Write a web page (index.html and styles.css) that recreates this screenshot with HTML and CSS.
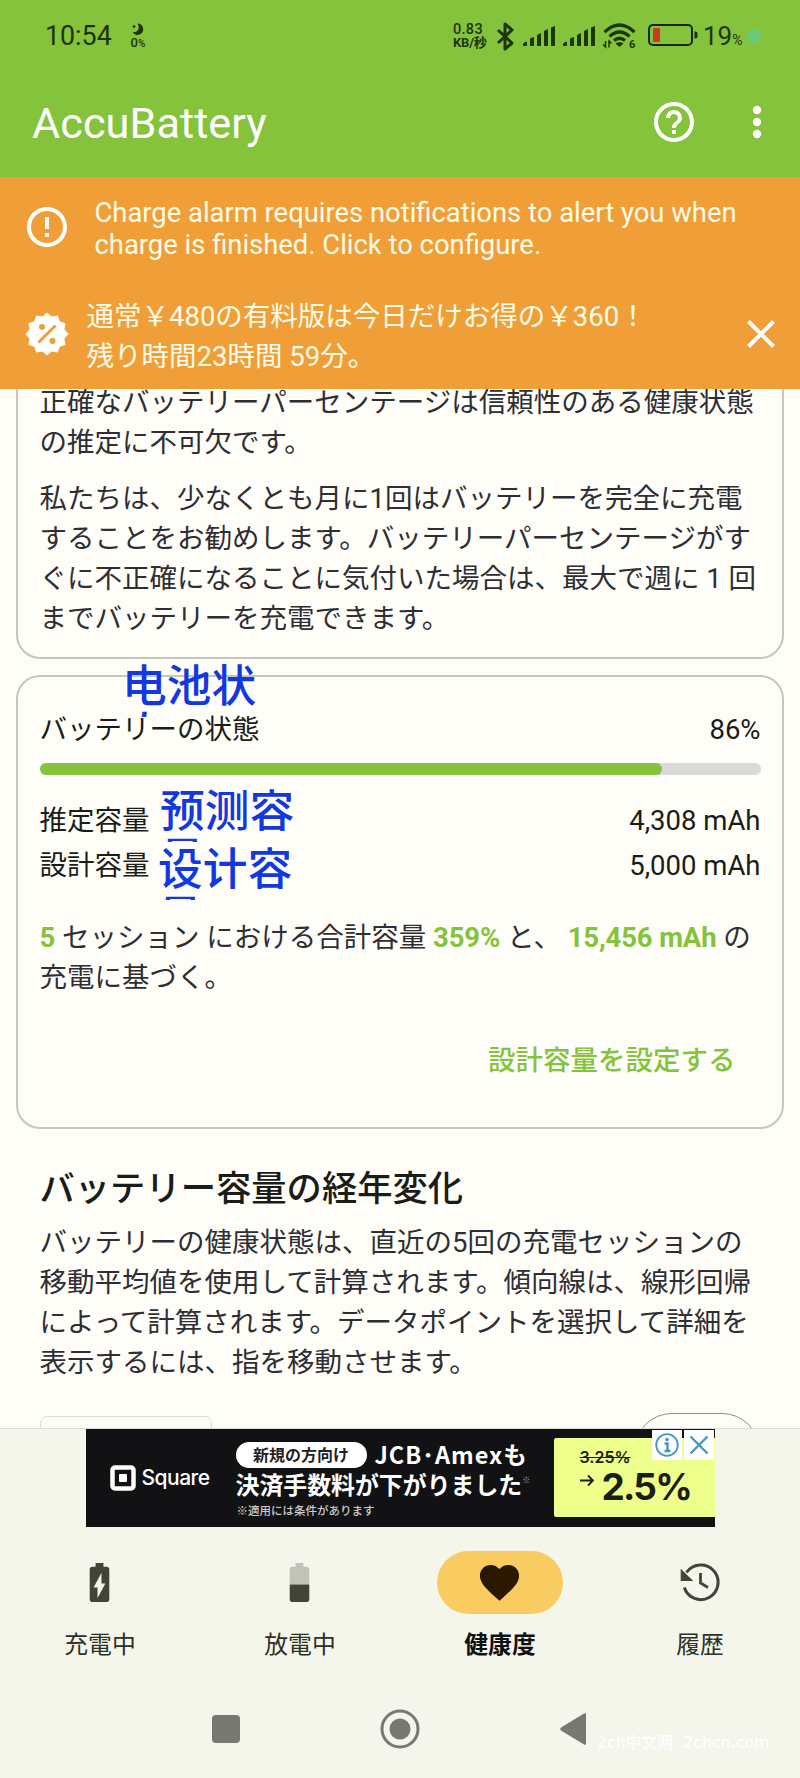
FILE: index.html
```html
<!DOCTYPE html>
<html lang="ja">

<head>
    <meta charset="UTF-8">
    <meta name="viewport" content="width=device-width, initial-scale=1.0">
    <title>AccuBattery</title>
    <link rel="stylesheet" href="styles.css">
</head>

<body>

    <header class="header">
        <div class="status">
            <span class="time">10:54</span>
            <div class="moon">
                <svg width="12" height="12" viewBox="0 0 12 12">
                    <path d="M5.500 0.500a5.700 5.700 0 1 1-5 8.500c5 1.500 8-4 5-8.500z" />
                    <path d="M2 1.500l.7 1.300L4 3.500l-1.300.7L2 5.500l-.7-1.300L0 3.500l1.300-.7z" />
                </svg>
                <span>0<small>%</small></span>
            </div>
            <div class="status-right">
                <div class="speed">
                    <span>0.83</span>
                    <span class="unit">KB/秒</span>
                </div>
                <svg class="bt" width="19" height="29" viewBox="0 0 19 29">
                    <path d="M2 8l14 13-7 6V2l7 6L2 21" fill="none" stroke="#1b3608" stroke-width="3" stroke-linejoin="round" />
                </svg>
                <svg class="signal" width="32" height="22" viewBox="0 0 32 22">
                    <path d="M0 19q2-3 4-2v4H0zM7 13.500l4-1.500v9H7zM14 10l4-2v13h-4zM21 6l4-2v17h-4zM28 2.500l4-1.500v20h-4z" />
                </svg>
                <svg class="signal" width="32" height="22" viewBox="0 0 32 22">
                    <path d="M0 19q2-3 4-2v4H0zM7 13.500l4-1.500v9H7zM14 10l4-2v13h-4zM21 6l4-2v17h-4zM28 2.500l4-1.500v20h-4z" />
                </svg>
                <svg class="wifi" width="34" height="26" viewBox="0 0 34 26">
                    <g fill="none" stroke="#1b3608" stroke-width="3.200">
                        <path d="M1.500 9q15-14 30 0" />
                        <path d="M6.500 13.500q10-9 20 0" />
                        <path d="M11 17.500q5.500-4.500 11 0" />
                    </g>
                    <path d="M12.500 20.500q4-2.500 8 0L16.500 24z" />
                    <path d="M2.500 18v6L0 21.500M6 24.500v-6.500l2.500 2.500" fill="none" stroke="#1b3608" stroke-width="1.500" />
                    <text x="26" y="25" font-size="11" font-weight="700" letter-spacing="0">6</text>
                </svg>
                <svg class="batt" width="50" height="22" viewBox="0 0 50 22">
                    <rect x="1" y="1" width="43" height="20" rx="4" fill="none" stroke="#14280a" stroke-width="2" />
                    <rect x="5" y="4" width="7" height="14" rx="1" fill="#c93b20" />
                    <path d="M46.500 7.500h1q2 0 2 2v3q0 2-2 2h-1z" />
                </svg>
                <span class="level">19<small>%</small></span>
                <i class="dot"></i>
            </div>
        </div>
        <div class="toolbar">
            <h1>AccuBattery</h1>
            <svg class="help" width="48" height="48" viewBox="0 0 24 24">
                <path d="M11 18h2v-2h-2v2zm1-16C6.480 2 2 6.480 2 12s4.480 10 10 10 10-4.480 10-10S17.520 2 12 2zm0 18c-4.410 0-8-3.590-8-8s3.590-8 8-8 8 3.590 8 8-3.590 8-8 8zm0-14c-2.210 0-4 1.790-4 4h2c0-1.100.9-2 2-2s2 .9 2 2c0 2-3 1.750-3 5h2c0-2.250 3-2.500 3-5 0-2.210-1.790-4-4-4z" />
            </svg>
            <svg class="more" width="48" height="48" viewBox="0 0 24 24">
                <circle cx="12" cy="6" r="2.100" />
                <circle cx="12" cy="12" r="2.100" />
                <circle cx="12" cy="18" r="2.100" />
            </svg>
        </div>
    </header>

    <div class="banner">
        <div class="alarm">
            <svg width="48" height="48" viewBox="0 0 24 24">
                <path d="M11 15h2v2h-2zm0-8h2v6h-2zm.99-5C6.470 2 2 6.480 2 12s4.470 10 9.990 10C17.520 22 22 17.520 22 12S17.520 2 11.990 2zM12 20c-4.420 0-8-3.580-8-8s3.580-8 8-8 8 3.580 8 8-3.580 8-8 8z" />
            </svg>
            <p>Charge alarm requires notifications to alert you when<br>charge is finished. Click to configure.</p>
        </div>
        <div class="sale">
            <svg width="44" height="44" viewBox="-22 -22 44 44">
                <path d="M0-21.500L4.660-17.390 10.750-18.600 12.730-12.730 18.600-10.750 17.390-4.660 21.500 0 17.390 4.660 18.600 10.750 12.730 12.730 10.750 18.600 4.660 17.390 0 21.500-4.660 17.390-10.750 18.600-12.730 12.730-18.600 10.750-17.390 4.660-21.500 0-17.390-4.660-18.600-10.750-12.730-12.730-10.750-18.600-4.660-17.390z" />
                <g fill="#f09f38">
                    <circle cx="-5" cy="-7" r="3" />
                    <circle cx="5.500" cy="7" r="3" />
                </g>
                <path d="M-8.500 8.500L8.500-8.500" stroke="#f09f38" stroke-width="3" />
            </svg>
            <p>通常￥480の有料版は今日だけお得の￥360！<br>残り時間23時間 59分。</p>
            <svg class="close" width="28" height="28" viewBox="0 0 28 28">
                <path d="M1.500 1.500l25 25M26.500 1.500l-25 25" stroke="#fff" stroke-width="4" />
            </svg>
        </div>
    </div>

    <main class="main">
        <section class="card card-tips">
            <p>正確なバッテリーパーセンテージは信頼性のある健康状態<br>の推定に不可欠です。</p>
            <p>私たちは、少なくとも月に1回はバッテリーを完全に充電<br>することをお勧めします。バッテリーパーセンテージがす<br>ぐに不正確になることに気付いた場合は、最大で週に 1 回<br>までバッテリーを充電できます。</p>
        </section>

        <section class="card card-health">
            <div class="row row-title">
                <span>バッテリーの状態</span>
                <span>86%</span>
            </div>
            <div class="bar">
                <div class="bar-fill" style="width: 86.300%"></div>
            </div>
            <div class="row">
                <span>推定容量</span>
                <span>4,308 mAh</span>
            </div>
            <div class="row">
                <span>設計容量</span>
                <span>5,000 mAh</span>
            </div>
            <p class="based"><b>5</b> セッション における合計容量 <b>359%</b> と、 <b>15,456 mAh</b> の<br>充電に基づく。</p>
            <a class="set-link">設計容量を設定する</a>

            <!-- 中文注释 -->
            <div class="note note-state">电池状态</div>
            <div class="note note-estimate">预测容量</div>
            <div class="note note-design">设计容量</div>
        </section>

        <section class="history">
            <h2>バッテリー容量の経年変化</h2>
            <p>バッテリーの健康状態は、直近の5回の充電セッションの<br>移動平均値を使用して計算されます。傾向線は、線形回帰<br>によって計算されます。データポイントを選択して詳細を<br>表示するには、指を移動させます。</p>
            <div class="controls">
                <div class="control-box"></div>
                <div class="control-pill"></div>
            </div>
        </section>
    </main>

    <footer class="footer">
        <div class="ad">
            <div class="logo">
                <svg width="26" height="26" viewBox="0 0 26 26">
                    <rect x="2.500" y="2.500" width="21" height="21" rx="2.500" fill="none" stroke="#fff" stroke-width="4.500" />
                    <rect x="9" y="9" width="8" height="8" rx="1" fill="#fff" />
                </svg>
                <span>Square</span>
            </div>
            <div class="ad-text">
                <div class="ad-line1"><span class="tag">新規の方向け</span><span class="cards">JCB･Amexも</span></div>
                <div class="ad-line2">決済手数料が下がりました<sup>※</sup></div>
                <div class="ad-line3">※適用には条件があります</div>
            </div>
            <div class="rate">
                <s>3.25%</s>
                <div class="rate-new">
                    <svg width="15" height="13" viewBox="0 0 15 13">
                        <path d="M0 6.500h13M8 1.500l5 5-5 5" fill="none" stroke="#1c1e14" stroke-width="1.800" />
                    </svg>
                    <strong>2.5%</strong>
                </div>
            </div>
            <div class="ad-choices">
                <svg width="30" height="30" viewBox="0 0 30 30">
                    <circle cx="15" cy="15" r="10.800" fill="none" stroke="#4199bd" stroke-width="1.800" />
                    <circle cx="15" cy="9.500" r="1.800" fill="#4199bd" />
                    <path d="M12.500 13.500H15.500V21M12.500 21h6" fill="none" stroke="#4199bd" stroke-width="2.400" />
                </svg>
                <svg width="30" height="30" viewBox="0 0 30 30">
                    <path d="M6.500 6.500l17 17M23.500 6.500l-17 17" stroke="#4199bd" stroke-width="2.400" />
                </svg>
            </div>
        </div>

        <nav class="tabs">
            <a class="tab">
                <span class="tab-icon">
                    <svg width="47" height="47" viewBox="0 0 24 24">
                        <path d="M15.670 4H14V2h-4v2H8.330C7.600 4 7 4.600 7 5.330v15.330C7 21.400 7.600 22 8.330 22h7.330c.74 0 1.340-.6 1.340-1.330V5.330C17 4.600 16.400 4 15.670 4zM11 20v-5.500H9L13 7v5.500h2L11 20z" />
                    </svg>
                </span>
                <span>充電中</span>
            </a>
            <a class="tab">
                <span class="tab-icon">
                    <svg width="47" height="47" viewBox="0 0 24 24">
                        <path fill="#c1c3b9" d="M17 5.330C17 4.600 16.400 4 15.670 4H14V2h-4v2H8.330C7.600 4 7 4.600 7 5.330V13h10V5.330z" />
                        <path d="M7 13v7.670C7 21.400 7.600 22 8.330 22h7.330c.74 0 1.340-.6 1.340-1.330V13H7z" />
                    </svg>
                </span>
                <span>放電中</span>
            </a>
            <a class="tab active">
                <span class="tab-icon">
                    <svg width="47" height="47" viewBox="0 0 24 24">
                        <path d="M12 21.350l-1.450-1.320C5.400 15.360 2 12.280 2 8.500 2 5.420 4.420 3 7.500 3c1.740 0 3.410.81 4.500 2.090C13.090 3.810 14.760 3 16.500 3 19.580 3 22 5.420 22 8.500c0 3.780-3.400 6.860-8.550 11.540L12 21.350z" />
                    </svg>
                </span>
                <span>健康度</span>
            </a>
            <a class="tab">
                <span class="tab-icon">
                    <svg width="40" height="40" viewBox="0 0 40 40">
                        <path d="M4.300 24.500A17.300 17.300 0 1 0 6.500 9.500" fill="none" stroke="#414439" stroke-width="3" />
                        <path d="M.7 5.700V18h12.600z" />
                        <path d="M20.500 10v10l7.500 4.500" fill="none" stroke="#414439" stroke-width="2.800" />
                    </svg>
                </span>
                <span>履歴</span>
            </a>
        </nav>

        <div class="sysnav">
            <svg width="28" height="28" viewBox="0 0 28 28">
                <rect width="28" height="28" rx="4" />
            </svg>
            <svg width="40" height="40" viewBox="0 0 40 40">
                <circle cx="20" cy="20" r="18" fill="none" stroke="#777872" stroke-width="3" />
                <circle cx="20" cy="20" r="10.500" />
            </svg>
            <svg width="28" height="34" viewBox="0 0 28 34">
                <path d="M1 18.500q-1.500-1.500 0-3L24 1.500q2-1 2 1v29q0 2-2 1z" />
            </svg>
        </div>
        <div class="watermark">2ch中文网&nbsp; 2chcn.com</div>
    </footer>

</body>

</html>
```
FILE: styles.css
```css
body {
    width: 800px;
    height: 1778px;
    margin: 0;
    overflow: hidden;
    background: #fefdf7;
    color: #1b1c18;
    font-family: Roboto, "Noto Sans CJK JP", sans-serif;
    font-size: 27.5px;
    line-height: 40px;
    white-space: nowrap;
}

h1,
h2,
p {
    margin: 0;
    font-weight: 400;
}

svg {
    display: block;
    flex: none;
}

/* header */
.header {
    height: 177px;
    background: #85c33c;
}

.status {
    display: flex;
    align-items: center;
    height: 72px;
    padding: 0 39px 0 45px;
    color: #1b3608;
    fill: #1b3608;
}

.time {
    width: 85px;
    font-size: 26.8px;
}

.moon {
    display: flex;
    flex-direction: column;
    align-items: center;
    gap: 1px;
    width: 16px;
    font-size: 13px;
    line-height: 13px;
    font-weight: 500;
}

.moon small {
    font-size: 10px;
}

.status-right {
    display: flex;
    align-items: center;
    margin-left: auto;
}

.speed {
    display: flex;
    flex-direction: column;
    width: 36px;
    margin-right: 7px;
    font-size: 14.5px;
    line-height: 13px;
    font-weight: 500;
    letter-spacing: 0.3px;
}

.speed .unit {
    font-size: 13px;
    font-weight: 700;
    letter-spacing: -0.2px;
}

.bt {
    margin-right: 8px;
}

.signal {
    margin-right: 8px;
}

.wifi {
    margin-right: 10px;
    overflow: visible;
}

.batt {
    margin: 0 5px 2px 1px;
}

.level {
    width: 44px;
    padding-top: 3px;
    font-size: 26px;
}

.level small {
    font-size: 14px;
}

.dot {
    width: 14px;
    height: 14px;
    border-radius: 50%;
    background: #68cb7a;
}

.toolbar {
    display: flex;
    align-items: center;
    height: 100px;
    padding: 0 19px 0 32px;
    color: #fff;
    fill: #fff;
}

.toolbar h1 {
    margin-right: auto;
    padding-top: 4px;
    font-size: 43.3px;
}

.help {
    margin-right: 35px;
}

/* banner */
.banner {
    height: 212px;
    background: #f09f38;
    color: #fffbe8;
    fill: #fff;
}

.alarm {
    display: flex;
    align-items: center;
    height: 104px;
    padding-left: 23px;
}

.alarm svg {
    margin-bottom: 4px;
}

.alarm p {
    margin-left: 23.5px;
    font-size: 27.4px;
    line-height: 32px;
}

.sale {
    display: flex;
    align-items: center;
    height: 105px;
    padding: 0 25px;
}

.sale p {
    margin-left: 17.5px;
    padding-top: 7px;
}

.close {
    margin-left: auto;
}

/* main */
.main {
    height: 1039px;
    padding: 0 16px;
    overflow: hidden;
}

.card {
    position: relative;
    box-sizing: border-box;
    padding: 0 21.5px;
    border: 2px solid #c5c7be;
    border-radius: 24px;
}

.card-tips {
    height: 290px;
    margin-top: -20px;
    padding-top: 12px;
    color: #2e2e34;
}

.card-tips p {
    margin-bottom: 16px;
}

.card-health {
    display: flex;
    flex-direction: column;
    height: 454px;
    margin-top: 16px;
    padding-top: 33px;
}

.row {
    display: flex;
    justify-content: space-between;
    line-height: 44.500px;
}

.row-title {
    line-height: 40px;
}

.bar {
    height: 12px;
    margin: 13px 0 24px;
    border-radius: 6px;
    background: #dadad9;
}

.bar-fill {
    height: 12px;
    border-radius: 6px;
    background: #85c33c;
}

.based {
    margin-top: 30px;
    color: #2e2e34;
}

.based b {
    color: #85c33c;
    letter-spacing: -0.15px;
}

.set-link {
    margin: 43px 25px 0 0;
    color: #85c33c;
    font-weight: 500;
    text-align: right;
}

/* the last character wraps and is cut off */
.note {
    position: absolute;
    width: 140px;
    height: 58px;
    overflow: hidden;
    color: #1238e0;
    font-family: "Noto Sans CJK SC", sans-serif;
    font-size: 44.7px;
    font-weight: 500;
    line-height: 48px;
    white-space: normal;
    word-break: break-all;
}

.note-state {
    left: 104px;
    top: -18px;
}

.note-estimate {
    left: 142px;
    top: 107px;
}

.note-design {
    left: 140px;
    top: 165px;
}

.history {
    padding: 38px 23.5px 0;
}

.history h2 {
    height: 44px;
    margin-bottom: 12px;
    font-size: 35.300px;
    font-weight: 500;
    line-height: 44px;
}

.history p {
    color: #2e2e34;
}

.controls {
    display: flex;
    justify-content: space-between;
    padding: 30px 1px 0 0;
}

.control-box {
    width: 170px;
    height: 60px;
    margin-top: 3px;
    border: 1px solid #dcddd6;
    border-radius: 7px;
}

.control-pill {
    width: 124px;
    height: 74px;
    border: 1px solid #8f9189;
    border-radius: 38px;
}

/* footer */
.footer {
    position: relative;
    height: 349px;
    border-top: 1px solid #dcddd5;
    background: #f4f5eb;
}

.ad {
    position: relative;
    display: flex;
    box-sizing: border-box;
    width: 629px;
    height: 98px;
    margin: 0 85.5px;
    padding-left: 24px;
    background: #121214;
    color: #fff;
}

.logo {
    display: flex;
    align-items: center;
    width: 126px;
    gap: 6px;
    font-family: Inter, sans-serif;
    font-size: 21px;
    font-weight: 500;
    letter-spacing: -0.5px;
}

.ad-text {
    width: 318px;
    padding-top: 12px;
    font-family: "Noto Sans CJK JP", sans-serif;
    font-weight: 700;
}

.ad-line1 {
    display: flex;
    align-items: center;
    height: 27px;
}

.tag {
    width: 131px;
    height: 26px;
    border-radius: 13px;
    background: #fff;
    color: #222;
    font-size: 16px;
    line-height: 25px;
    text-align: center;
}

.cards {
    margin-left: 8px;
    font-size: 23.5px;
    line-height: 27px;
    letter-spacing: 1px;
}

.ad-line2 {
    height: 33px;
    font-size: 23.900px;
    line-height: 32px;
}

.ad-line2 sup {
    color: #aaa;
    font-size: 8px;
    line-height: 0;
    vertical-align: 11px;
}

.ad-line3 {
    padding-left: 1px;
    color: #ccc;
    font-size: 11.500px;
    font-weight: 500;
    line-height: 18px;
}

.rate {
    box-sizing: border-box;
    width: 161px;
    height: 79px;
    margin-top: 9px;
    padding: 9px 0 0 26px;
    border-radius: 2px 0 0 2px;
    background: #eeff8c;
    color: #1c1e14;
    font-family: Inter, sans-serif;
}

.rate s {
    display: block;
    font-size: 16px;
    font-weight: 600;
    line-height: 20px;
}

.rate-new {
    display: flex;
    gap: 7px;
    padding-top: 4px;
}

.rate-new svg {
    margin-top: 3px;
}

.rate-new strong {
    font-size: 37px;
    font-weight: 700;
    line-height: 32px;
    letter-spacing: -1.8px;
}

.ad-choices {
    position: absolute;
    top: 1px;
    right: 1px;
    display: flex;
    gap: 2px;
}

.ad-choices svg {
    background: #fff;
}

.tabs {
    display: flex;
    height: 158px;
    padding-top: 24px;
    box-sizing: border-box;
}

.tab {
    display: flex;
    flex-direction: column;
    align-items: center;
    width: 200px;
    color: #2d3026;
    fill: #414439;
    font-size: 23.8px;
}

.tab-icon {
    display: flex;
    align-items: center;
    justify-content: center;
    box-sizing: border-box;
    width: 126px;
    height: 63px;
    margin-bottom: 11px;
    padding: 0 1px 0 0;
    border-radius: 32px;
}

.active {
    color: #111;
    fill: #2a1800;
    font-weight: 700;
}

.active .tab-icon {
    background: #f8cc60;
}

.sysnav {
    display: flex;
    align-items: center;
    justify-content: space-between;
    height: 88px;
    padding: 0 212px;
    fill: #777872;
}

.watermark {
    position: absolute;
    left: 597px;
    top: 299px;
    color: #fff;
    font-family: "DejaVu Sans", "Noto Sans CJK SC", sans-serif;
    font-size: 15.800px;
    font-weight: 500;
    line-height: 30px;
}
```
